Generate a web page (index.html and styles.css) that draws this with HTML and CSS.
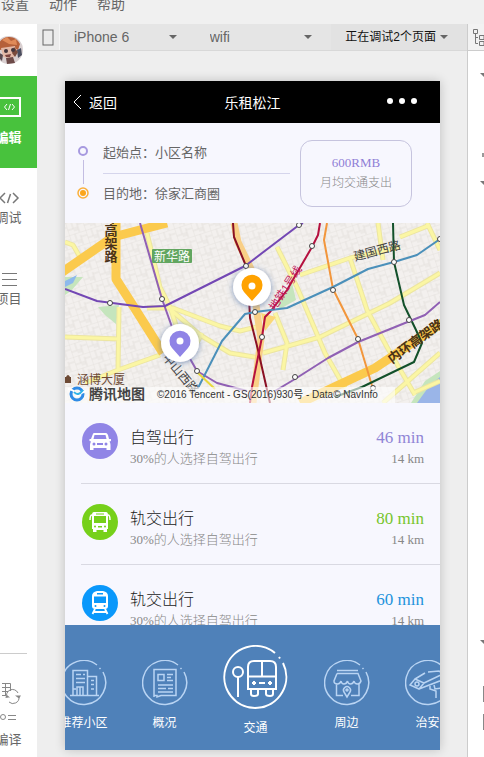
FILE: index.html
```
<!DOCTYPE html>
<html lang="zh-CN">
<head>
  <meta charset="UTF-8" />
  <meta name="viewport" content="width=device-width, initial-scale=1.0" />
  <title>乐租松江</title>
  <link rel="stylesheet" href="styles.css">
</head>
<body>
  <nav class="menubar">
    <a href="#">设置</a>
    <a href="#">动作</a>
    <a href="#">帮助</a>
  </nav>

  <div class="workspace">
    <aside class="sidebar">
      <div class="sidebar-inner">
        <div class="avatar">
          <svg width="30" height="30" viewBox="0 0 30 30">
            <circle cx="15" cy="15" r="14" fill="#d9cfd0"/>
            <path d="M3 14 Q5 3 14 2 Q22 1 26 9 L24 15 L18 12 L6 15Z" fill="#b5603a"/>
            <path d="M8 5 L13 2 L17 6 L22 4 L23 10 L15 9Z" fill="#e08a58"/>
            <path d="M7 13 L21 11 L22 19 L18 24 L9 22Z" fill="#e3b8a6"/>
            <path d="M4 17 L9 20 L8 26 L3 21Z" fill="#59494f"/>
            <path d="M23 15 L27 13 L28 20 L24 23Z" fill="#4b4e5f"/>
            <path d="M20 12 L24 17 L21 22 L18 18Z" fill="#7a4a3c"/>
            <path d="M12 23 L19 22 L21 28 L13 29Z" fill="#6d4a48"/>
            <circle cx="12" cy="16" r="2" fill="#43353c"/>
            <circle cx="19" cy="15" r="2" fill="#43353c"/>
            <path d="M11 20 L17 19 L16 22 L12 22Z" fill="#7d4440"/>
          </svg>
        </div>
        <button class="side-item active">
          <svg width="24" height="20" viewBox="0 0 24 20" fill="none" stroke="#fff">
            <rect x="1" y="1" width="22" height="18" stroke-width="2"/>
            <path d="M10 7 L7.500 10 L10 13 M15 7 L17.500 10 L15 13 M13.500 7 L11.500 13"/>
          </svg>
          <span>编辑</span>
        </button>
        <button class="side-item">
          <svg width="24" height="16" viewBox="0 0 24 16" fill="none" stroke="#777" stroke-width="1.500">
            <path d="M8 3 L3 8 L8 13 M16 3 L21 8 L16 13 M13.500 4 L10.500 13"/>
          </svg>
          <span>调试</span>
        </button>
        <button class="side-item">
          <svg width="24" height="16" viewBox="0 0 24 16" fill="none" stroke="#777">
            <path d="M5 2.500 H20 M5 8.500 H20 M5 14.500 H20"/>
          </svg>
          <span>项目</span>
        </button>
        <div class="side-bottom">
          <button class="side-item compile">
            <svg width="32" height="46" viewBox="0 0 32 46" fill="none" stroke="#888">
              <path d="M9 1.500 H17.500 V9 M9 5.500 H17 M9 9.500 H15 M9 13.500 H13 M12.500 1 V13"/>
              <path d="M14 16 A6 6 0 0 1 25 11 M26 15 A6 6 0 0 1 16 20"/>
              <path d="M22 13.500 H28 L26 16.500Z M12 15.500 H17 L14 13Z" fill="#888" stroke="none"/>
              <circle cx="10" cy="35" r="2.500"/>
              <path d="M15 33.500 H23 M15 37.500 H23"/>
            </svg>
            <span>编译</span>
          </button>
        </div>
      </div>
    </aside>

    <main class="simulator">
      <div class="toolbar">
        <button class="device-btn" aria-label="设备">
          <svg width="12" height="18" viewBox="0 0 12 18"><rect x="1" y="2" width="10" height="15" fill="none" stroke="#666"/></svg>
        </button>
        <label class="picker picker-device">
          <select aria-label="机型"><option>iPhone 6</option></select>
        </label>
        <label class="picker picker-network">
          <select aria-label="网络"><option>wifi</option></select>
        </label>
        <label class="picker picker-pages">
          <select aria-label="页面"><option>正在调试2个页面</option></select>
        </label>
      </div>

      <div class="stage">
        <div class="phone">
          <header class="navbar">
            <a class="back" href="#">
              <svg width="10" height="16" viewBox="0 0 10 16"><path d="M9 1 L2 8 L9 15" fill="none" stroke="#fff"/></svg>
              返回
            </a>
            <h1>乐租松江</h1>
            <button class="more" aria-label="更多">
              <svg width="30" height="8" viewBox="0 0 30 8" fill="#fff"><circle cx="3" cy="3" r="3"/><circle cx="15" cy="3" r="3"/><circle cx="27" cy="3" r="3"/></svg>
            </button>
          </header>

          <section class="route">
            <svg class="route-marks" width="12" height="56" viewBox="0 0 12 56" fill="none">
              <circle cx="6" cy="6" r="4" stroke="#a79ae0" stroke-width="2"/>
              <path d="M6.500 15 V39" stroke="#c3bde2"/>
              <circle cx="6" cy="48" r="5" stroke="#fbb03a" stroke-width="1.500"/>
              <circle cx="6" cy="48" r="3" fill="#fba61c"/>
            </svg>
            <div class="route-stops">
              <p>起始点：小区名称</p>
              <p>目的地：徐家汇商圈</p>
            </div>
            <div class="cost">
              <strong>600RMB</strong>
              <span>月均交通支出</span>
            </div>
          </section>

          <svg class="map" viewBox="0 0 375 180" preserveAspectRatio="xMidYMid slice">
            <defs>
              <pattern id="blocks" width="17" height="13" patternUnits="userSpaceOnUse" patternTransform="rotate(-18)">
                <rect width="17" height="13" fill="#f3f0ee"/>
                <path d="M0 0 H17 M0 0 V13 M6 0 V8 M0 8 H11 M11 3 V13 M11 5 H17 M6 10 H11" stroke="#e6e2de" fill="none"/>
              </pattern>
              <filter id="glow" x="-50%" y="-50%" width="200%" height="200%">
                <feDropShadow dx="0" dy="1" stdDeviation="3" flood-color="#4a6ea8" flood-opacity="0.7"/>
              </filter>
              <path id="streets" d="M0 19 L8 22 L15 34 M82 10 L95 64 L105 84 L112 105 M0 114 L55 116 M54 84 L53 147 M20 160 L53 147 L95 132 M82 85 L108 85 L155 103 L175 108 L195 103 M105 86 L135 112 L165 130 L195 135 M128 128 L137 110 M235 52 L285 35 L335 24 M212 24 L232 64 L260 130 L280 165 M285 35 L302 87 L322 124 L350 172 M198 130 L255 114 L325 80 L375 50 M313 0 L318 37 M362 0 L375 27 M335 14 L365 2 M210 90 L222 120 L218 147 M318 180 L375 130 M348 170 L375 158"/>
            </defs>
            <rect width="375" height="180" fill="url(#blocks)"/>

            <!-- parks and water -->
            <path d="M0 54 L18 54 L6 68 L0 72Z M33 84 L54 82 L51 101 L40 92Z M212 80 L227 60 L231 77 L215 86Z" fill="#c5e5bd"/>
            <path d="M0 58 L12 52 L8 60 L0 64Z" fill="#8db9ec"/>
            <path d="M346 180 L360 158 L375 148 V180Z" fill="#c5e5bd"/>
            <path d="M352 180 L365 162 L375 154 V180Z" fill="#9ab5e8"/>

            <!-- side streets -->
            <use href="#streets" fill="none" stroke="#ece5a0" stroke-width="5" stroke-linejoin="round"/>
            <use href="#streets" fill="none" stroke="#fbf6a4" stroke-width="3" stroke-linejoin="round"/>

            <!-- elevated roads -->
            <g fill="none" stroke="#fbca4d" stroke-width="9" stroke-linejoin="round">
              <path d="M-4 50 L48 14 L102 0"/>
              <path d="M51 0 L51 56 L67 81 L98 130"/>
              <path d="M235 180 L310 145 L380 98"/>
            </g>
            <path d="M169 0 L173 19 L187 48 L192 90 L196 115 L188 180" fill="none" stroke="#f9cf86" stroke-width="7"/>
            <path d="M196 90 L211 94 L200 108Z" fill="#fbd878"/>

            <!-- metro lines -->
            <g fill="none" stroke-width="2" stroke-linejoin="round">
              <path d="M168 0 L169 14 L181 43 L184 75 L185 95 L193 127 L205 180" stroke="#8a1024"/>
              <path d="M255 0 L253 12 L247 24 L222 67 L205 89 L200 94 L197 114 L187 164 L185 180" stroke="#b5103f"/>
              <path d="M262 0 L259 17 L268 66 L293 116 L308 166" stroke="#f2963c"/>
              <path d="M328 0 L329 39 L339 82 L351 107 L357 120 L349 139 L297 164 L270 174" stroke="#12502a"/>
              <path d="M75 0 L97 76 L107 104 L132 148 L152 160 L182 168 M210 168 L230 156 L263 135 L293 119 L345 98 L360 92 L375 79" stroke="#9060b4"/>
              <path d="M0 66 L32 78 L78 84 L100 83 L180 43 L234 2 L238 0" stroke="#7347b4"/>
              <path d="M133 165 L157 118 L180 91 L190 89 L222 85 L268 64 L303 46 L329 39 L352 32 L375 16" stroke="#4b90ba"/>
              <path d="M133 150 L150 166" stroke="#e8d83c"/>
            </g>
            <g fill="#fff" stroke="#444">
              <circle cx="45" cy="80" r="2.500"/><circle cx="97" cy="76" r="2.500"/><circle cx="181" cy="43" r="2.500"/>
              <circle cx="190" cy="89" r="2.500"/><circle cx="132" cy="148" r="2.500"/><circle cx="234" cy="2" r="2.500"/>
              <circle cx="247" cy="23" r="2.500"/><circle cx="268" cy="67" r="2.500"/><circle cx="293" cy="116" r="2.500"/>
              <circle cx="329" cy="39" r="2.500"/><circle cx="344" cy="97" r="2.500"/><circle cx="197" cy="114" r="2.500"/>
              <circle cx="230" cy="154" r="2.500"/><circle cx="308" cy="165" r="2.500"/><circle cx="375" cy="16" r="2.500"/>
            </g>

            <!-- place names -->
            <g class="map-road">
              <text class="map-down" x="46" y="-12">环高架路</text>
              <text x="327" y="141" transform="rotate(-36 327 141)">内环高架路</text>
            </g>
            <rect x="87" y="26" width="40" height="14" rx="1" fill="#62a660"/>
            <text class="map-sign" x="89" y="38">新华路</text>
            <text class="map-street" x="290" y="38" transform="rotate(-15 290 38)">建国西路</text>
            <text class="map-street" x="97" y="135" transform="rotate(50 97 135)">中山西路</text>
            <text class="map-metro" x="210" y="88" transform="rotate(-57 210 88)">地铁1号线</text>
            <path d="M0 154 H6 V160 H0Z M1 154 Q3 150 5 154Z" fill="#6d4a35"/>
            <text class="map-place" x="12" y="161">涵博大厦</text>

            <!-- attribution -->
            <rect y="164" width="330" height="16" fill="#fff" opacity="0.600"/>
            <circle cx="12" cy="171" r="6" fill="none" stroke="#2f8be6" stroke-width="3"/>
            <path d="M3 166 Q9 166 12 173 Q15 170 21 168" fill="none" stroke="#fff" stroke-width="2"/>
            <path d="M9 169 Q13 174 18 167" fill="none" stroke="#2fb3e8" stroke-width="2"/>
            <text class="map-brand" x="24" y="176">腾讯地图</text>
            <text class="map-copy" x="92" y="175">©2016 Tencent - GS(2016)930号 - Data© NavInfo</text>

            <!-- start and destination pins -->
            <circle cx="115" cy="120" r="19" fill="#fff" filter="url(#glow)"/>
            <path d="M115 134 L107 125 A10.500 10.500 0 1 1 123 125Z" fill="#8f83e6"/>
            <circle cx="115" cy="118" r="3.500" fill="#fff"/>
            <circle cx="187" cy="64" r="19" fill="#fff" filter="url(#glow)"/>
            <path d="M187 78 L179 69 A10.500 10.500 0 1 1 195 69Z" fill="#ffa200"/>
            <circle cx="187" cy="63" r="3.500" fill="#fff"/>
          </svg>

          <ul class="modes">
            <li class="mode car">
              <svg width="36" height="36" viewBox="0 0 36 36">
                <circle cx="18" cy="18" r="18" fill="#9085e6"/>
                <path d="M12 10 H24 Q25 10 26 12 L27 16 H29 V18 L27.500 18.500 Q28.500 20 28.500 22 V27 H24.500 V25 H11.500 V27 H8 V22 Q8 20 9 18.500 L7.500 18 V16 H9 L10.500 12 Q11 10 12 10Z" fill="#fff"/>
                <path d="M12.500 12 H23.500 L24.500 16 H11.500Z" fill="#9085e6"/>
                <circle cx="12" cy="21" r="1.500" fill="#9085e6"/><circle cx="24" cy="21" r="1.500" fill="#9085e6"/>
                <path d="M15 20 H21 V22 H15Z" fill="#9085e6"/>
              </svg>
              <div class="mode-text">
                <h2>自驾出行</h2>
                <p>30%的人选择自驾出行</p>
              </div>
              <div class="mode-cost">
                <strong>46 min</strong>
                <span>14 km</span>
              </div>
            </li>
            <li class="mode metro">
              <svg width="36" height="36" viewBox="0 0 36 36">
                <circle cx="18" cy="18" r="18" fill="#76d01a"/>
                <path d="M12 8 H24 Q26 8 26 11 V25 H25 V28 H21.500 V26 H14.500 V28 H11 V25 H10 V11 Q10 8 12 8Z" fill="#fff"/>
                <path d="M12 12 H24 V19 H12Z M14 9.500 H22 V10.500 H14Z M16 22 H20 V23.500 H16Z" fill="#76d01a"/>
                <circle cx="13" cy="22.500" r="1" fill="#76d01a"/><circle cx="23" cy="22.500" r="1" fill="#76d01a"/>
                <path d="M10 11 Q8 11 8 16 M26 11 Q28 11 28 16" fill="none" stroke="#fff" stroke-width="1.500"/>
              </svg>
              <div class="mode-text">
                <h2>轨交出行</h2>
                <p>30%的人选择自驾出行</p>
              </div>
              <div class="mode-cost">
                <strong>80 min</strong>
                <span>14 km</span>
              </div>
            </li>
            <li class="mode train">
              <svg width="36" height="36" viewBox="0 0 36 36">
                <circle cx="18" cy="18" r="18" fill="#0a98fb"/>
                <path d="M15 6 H21 Q26 7 26 11 V21 Q26 24 23 24 H13 Q10 24 10 21 V11 Q10 7 15 6Z" fill="#fff"/>
                <path d="M12 11.500 H24 V18 H12Z M15 8 H21 V9.500 H15Z" fill="#0a98fb"/>
                <circle cx="13.500" cy="21" r="1" fill="#0a98fb"/><circle cx="22.500" cy="21" r="1" fill="#0a98fb"/>
                <path d="M13 24 L10.500 29 M23 24 L25.500 29 M12 27 H24" fill="none" stroke="#fff" stroke-width="1.800"/>
              </svg>
              <div class="mode-text">
                <h2>轨交出行</h2>
                <p>30%的人选择自驾出行</p>
              </div>
              <div class="mode-cost">
                <strong>60 min</strong>
                <span>14 km</span>
              </div>
            </li>
          </ul>

          <nav class="tabs">
            <ul>
              <li><a class="tab" href="#">
                <svg width="46" height="46" viewBox="0 0 46 46">
                  <path d="M36 5 A22 22 0 1 0 42 12 M38.500 8 L39.500 9"/>
                  <path d="M12 35.500 V10.500 H26.500 V35 M26.500 16.500 H35.500 V35 M9 35.500 H38 M15 14.500 H20 M22 14.500 H24 M15 18.500 H24 M15 22.500 H24 M30 20.500 H33 M30 24.500 H33 M16 35 V27 H22 V35 M19 27 V35 M12 29 H15 M30 29 H33"/>
                </svg>
                推荐小区
              </a></li>
              <li><a class="tab" href="#">
                <svg width="46" height="46" viewBox="0 0 46 46">
                  <path d="M36 5 A22 22 0 1 0 42 12 M38.500 8 L39.500 9"/>
                  <path d="M12 37 V9.500 H34 V35.500 H19 L15 37 V35.500 H12 M16 14.500 H22 V20.500 H16Z M25 14.500 H31 M25 17.500 H29 M25 20.500 H31 M16 25 H31 M16 28.500 H24 M26 28.500 H31 M16 32 H31"/>
                </svg>
                概况
              </a></li>
              <li><a class="tab current" href="#">
                <svg width="66" height="66" viewBox="0 0 66 66">
                  <path d="M52 8 A31 31 0 1 0 60 18"/>
                  <path d="M56 12 L57 13.500"/>
                  <circle cx="15" cy="27" r="5"/>
                  <path d="M15 32 V52 M25 44 V22 Q25 16 31 16 H47 Q53 16 53 22 V44Z M25 31.500 H53 M39 16 V31 M28 44 V49 Q28 51 31 51 Q35 51 35 49 V44 M43 44 V49 Q43 51 47 51 Q50 51 50 49 V44"/>
                  <path d="M31 36 V40 M29 38 H33 M47 36 V40 M45 38 H49 M36 38 H42"/>
                </svg>
                交通
              </a></li>
              <li><a class="tab" href="#">
                <svg width="46" height="46" viewBox="0 0 46 46">
                  <path d="M36 5 A22 22 0 1 0 42 12 M38.500 8 L39.500 9"/>
                  <path d="M13 10.500 H34 M13 13.500 H34 L37 21 Q36 24 33.500 24 Q30.500 24 30 21 Q29 24 26.500 24 Q24 24 23.500 21 Q22.500 24 20 24 Q17.500 24 17 21 Q16 24 13.500 24 Q10 24 10 21 L13 13.500 M12.500 24 V35.500 H19 M27 35.500 H35 V24"/>
                  <path d="M23 37 L20 32 A3.500 3.500 0 1 1 26 32Z"/>
                  <circle cx="23" cy="30" r="1"/>
                </svg>
                周边
              </a></li>
              <li><a class="tab" href="#">
                <svg width="46" height="46" viewBox="0 0 46 46">
                  <path d="M36 5 A22 22 0 1 0 42 12 M38.500 8 L39.500 9"/>
                  <path d="M10 19 L5 25 L14 29 L19 23Z M10 19 L20 13 M23 12 L34 11 L38 14 L19 23 M14 29 L40 19 M25 26 V29 L31 31 V38 M29 25 L30 29 L36 28"/>
                  <circle cx="12" cy="24" r="2"/>
                </svg>
                治安
              </a></li>
            </ul>
          </nav>
        </div>
      </div>
    </main>

    <aside class="inspector">
      <div class="inspector-bar">
        <svg width="16" height="20" viewBox="0 0 16 20" fill="none" stroke="#777"><path d="M1.500 1.500 H5.500 V5.500 H1.500Z M3.500 6 V15.500 H6 M3.500 9.500 H6 M7.500 7.500 H12 V11.500 H7.500Z M7.500 13.500 H12 V17.500 H7.500Z"/></svg>
      </div>
      <div class="tree">
        <i class="caret"></i>
        <i class="dot"></i>
        <i class="caret"></i>
        <div class="panes">
          <i class="caret"></i>
          <i class="pane"></i>
          <i class="pane"></i>
        </div>
      </div>
    </aside>
  </div>
</body>
</html>
```
FILE: styles.css
```
* { box-sizing: border-box; }
html, body { height: 100%; }
body { margin: 0; display: flex; flex-direction: column; overflow: hidden; background: #eee; color: #666; font-family: "Liberation Sans", "Noto Sans CJK SC", sans-serif; font-size: 14px; }
h1, h2, p, ul { margin: 0; padding: 0; font-weight: normal; }
ul { list-style: none; }
a { color: inherit; text-decoration: none; }
button { padding: 0; border: none; background: none; font: inherit; color: inherit; cursor: pointer; }
svg { display: block; flex: none; }

.menubar { flex: none; display: flex; gap: 20px; height: 24px; padding-left: 1px; line-height: 8px; background: #f0f0f0; }
.workspace { flex: 1; min-height: 0; display: flex; }

/* left tool strip, its left part runs off the window */
.sidebar { flex: none; width: 37px; display: flex; justify-content: flex-end; overflow: hidden; background: #fff; }
.sidebar-inner { flex: none; width: 57px; display: flex; flex-direction: column; }
.avatar { height: 52px; display: flex; align-items: center; justify-content: center; }
.side-item { height: 81px; display: flex; flex-direction: column; align-items: center; justify-content: center; gap: 3px; font-size: 13px; line-height: 18px; }
.side-item.active { height: 92px; gap: 12px; background: #48c23d; color: #fff; font-weight: bold; }
.side-bottom { margin: auto 10px 0; border-top: 1px solid #ccc; }
.side-item.compile { width: 100%; height: 103px; padding-top: 20px; }

.simulator { flex: 1; min-width: 0; display: flex; flex-direction: column; }
.toolbar { flex: none; display: flex; height: 27px; background: #e5e5e5; border-bottom: 1px solid #d8d8d8; }
.device-btn { width: 23px; display: flex; align-items: center; justify-content: center; background: #ebebeb; border-right: 1px solid #f5f5f5; }
.picker { flex: 1; display: grid; align-items: center; }
.picker select { grid-area: 1 / 1; width: 100%; height: 100%; appearance: none; border: none; border-radius: 0; background: none; padding: 0 0 0 14px; font: inherit; color: #666; }
.picker::after { content: ""; grid-area: 1 / 1; justify-self: end; margin-right: 19px; border: 4px solid transparent; border-top-color: #666; border-bottom: none; pointer-events: none; }
.picker-pages { background: #e2e2e2; }
.picker-pages select { font-size: 12px; color: #111; }

.stage { flex: 1; min-height: 0; display: flex; padding: 30px 27px 7px 28px; }
.phone { flex: 1; min-width: 0; display: flex; flex-direction: column; background: #f7f7fe; box-shadow: 0 0 10px rgba(0,0,0,0.2); }

.navbar { flex: none; display: grid; grid-template-columns: 1fr auto 1fr; align-items: center; height: 42px; padding: 0 7px; background: #000; color: #fff; }
.navbar h1 { font-size: 14px; }
.back { display: flex; align-items: center; gap: 7px; }
.more { justify-self: end; margin-right: 16px; }

.route { flex: none; display: flex; align-items: center; height: 100px; padding: 0 28px 0 12px; font-size: 13px; }
.route-stops { flex: 1; margin: 0 10px 0 14px; line-height: 40px; }
.route-stops p + p { border-top: 1px solid #d5d5ec; }
.cost { width: 112px; height: 67px; display: flex; flex-direction: column; align-items: center; justify-content: center; border: 1px solid #c6c4de; border-radius: 12px; color: #888; font-size: 12px; line-height: 20px; }
.cost strong { font-size: 13px; font-weight: normal; color: #8f80d6; }
.route-stops, .cost, .mode-text { font-family: "Liberation Serif", "Noto Sans CJK SC", serif; }
.route-stops, .cost, .mode h2, .mode p { font-weight: 300; }

.map { width: 100%; height: 180px; }
.map-road { font-size: 13px; font-weight: bold; fill: #4a3218; }
.map-down { font-family: "Noto Sans CJK SC", sans-serif; writing-mode: vertical-rl; }
.map-sign { font-size: 12px; fill: #fff; }
.map-street { font-size: 12px; fill: #444; }
.map-metro { font-size: 11px; fill: #c2185b; }
.map-place { font-size: 12px; fill: #6d4a35; }
.map-brand { font-size: 14px; font-weight: bold; fill: #444; }
.map-copy { font-size: 10px; fill: #333; }

.modes { flex: 1; min-height: 0; overflow: hidden; }
.mode { display: flex; align-items: flex-start; height: 81px; margin-left: 16px; padding: 20px 16px 0 1px; border-bottom: 1px solid #d9d9e2; }
.mode-text { flex: 1; margin-left: 12px; padding-top: 4px; }
.mode h2 { font-size: 16px; line-height: 22px; color: #222; }
.mode p { font-size: 13px; line-height: 20px; color: #888; }
.mode-cost { display: flex; flex-direction: column; align-items: flex-end; padding-top: 4px; font-family: "Liberation Serif", serif; }
.mode-cost strong { font-size: 17px; font-weight: normal; line-height: 22px; }
.mode-cost span { font-size: 13px; line-height: 20px; color: #888; }
.car strong { color: #9085d6; }
.metro strong { color: #76c52c; }
.train strong { color: #1d93dc; }

/* scrolled tab strip, first and last tabs are cut by the screen edge */
.tabs { flex: none; height: 125px; overflow: hidden; background: #4f81b9; color: #fff; font-size: 12px; line-height: 18px; }
.tabs ul { display: flex; margin-left: -22px; }
.tabs li { flex: none; }
.tab { display: flex; flex-direction: column; align-items: center; gap: 8px; width: 81px; padding-top: 35px; }
.tab svg { fill: none; stroke: #b9d4f3; stroke-width: 1.5; }
.tab.current { width: 101px; padding-top: 20px; }
.tab.current svg { stroke: #fff; stroke-width: 2; }

.inspector { flex: none; width: 17px; display: flex; flex-direction: column; overflow: hidden; background: #fff; border-left: 1px solid #ccc; }
.inspector-bar { flex: none; height: 27px; padding: 4px 0 0 4px; background: #f2f2f2; border-bottom: 1px solid #ccc; }
.tree { flex: 1; display: flex; flex-direction: column; align-items: flex-start; padding: 22px 0 27px 12px; }
.caret { border: 4px solid transparent; border-top-color: #777; border-bottom: none; }
.dot { width: 4px; height: 4px; margin: 76px 0 24px 2px; background: #999; }
.panes { margin-top: auto; display: flex; flex-direction: column; }
.pane { width: 8px; height: 16px; margin-left: 3px; background: #888; }
.panes .caret { margin-bottom: 42px; align-self: flex-start; }
.pane + .pane { margin-top: 12px; }
```
